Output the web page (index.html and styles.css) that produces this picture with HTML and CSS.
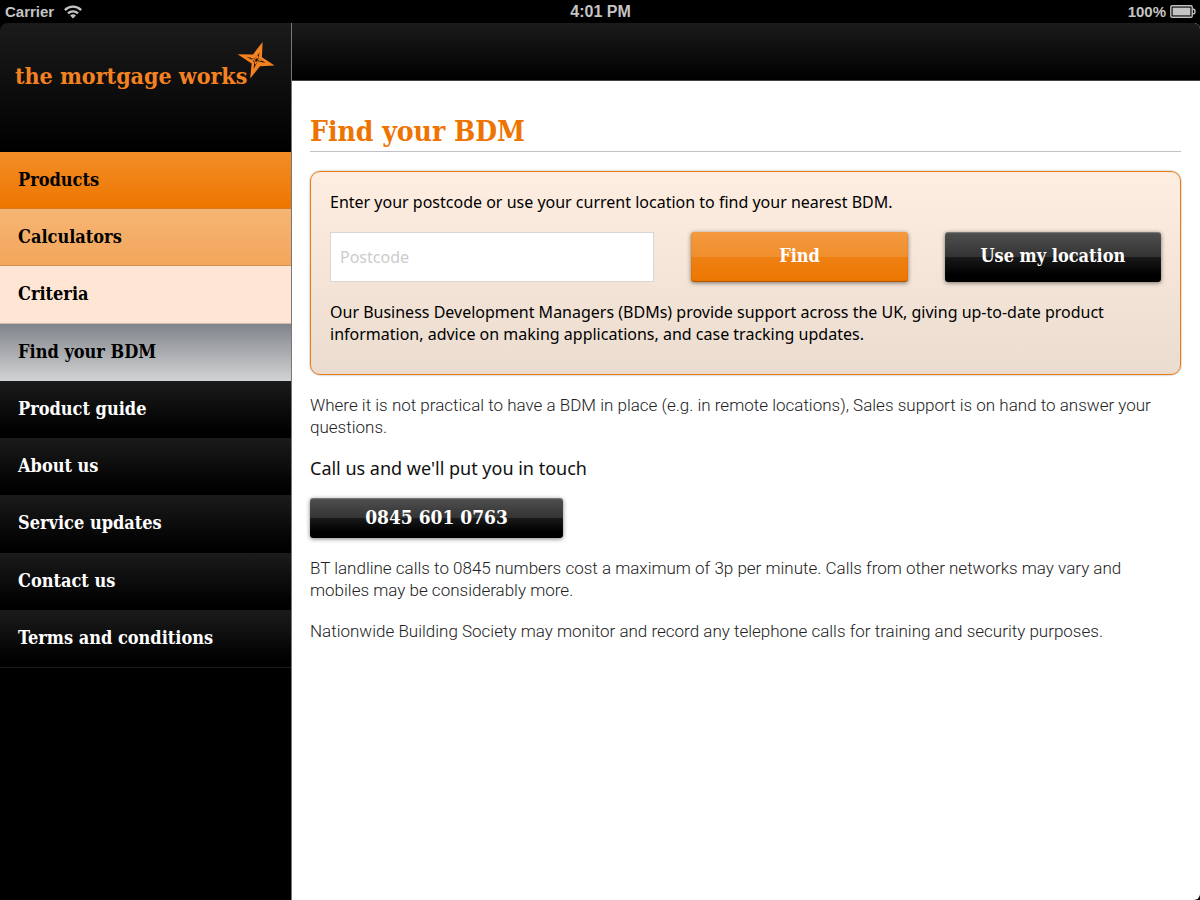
FILE: index.html
```
<!DOCTYPE html>
<html lang="en">
<head>
    <meta charset="UTF-8">
    <meta name="viewport" content="width=device-width, initial-scale=1.0">
    <title>Find your BDM - the mortgage works</title>
    <link rel="stylesheet" href="styles.css">
</head>
<body>
<header class="status-bar">
    <div class="status-left">
        <span>Carrier</span>
        <svg width="18" height="14" viewBox="0 0 18 14" fill="none" stroke="#c4c4c4" stroke-width="2.3">
            <path d="M0.9 5.1 A11.4 11.4 0 0 1 17.1 5.1"/>
            <path d="M4 8.4 A7 7 0 0 1 14 8.4"/>
            <path d="M9 13.6 L6.1 10.6 A4.1 4.1 0 0 1 11.9 10.6 Z" fill="#c4c4c4" stroke="none"/>
        </svg>
    </div>
    <div class="status-time">4:01 PM</div>
    <div class="status-right">
        <span>100%</span>
        <svg width="26" height="13" viewBox="0 0 26 13">
            <rect x="0.8" y="0.8" width="21.4" height="11.4" rx="1.2" fill="none" stroke="#c4c4c4" stroke-width="1.4"/>
            <rect x="2.6" y="2.6" width="17.8" height="7.8" fill="#c4c4c4"/>
            <path d="M22.6 4.2 H23.4 A1.6 2.3 0 0 1 23.4 8.8 H22.6" fill="none" stroke="#c4c4c4" stroke-width="1.4"/>
        </svg>
    </div>
</header>

<div class="app">
    <aside class="sidebar">
        <div class="logo">
            <span class="logo-text">the mortgage works</span>
            <svg class="logo-star" width="38" height="37" viewBox="0 0 38 37">
                <path fill="#f58220" d="M25.6 0 L24.9 15.2 L37.6 23.4 L23 24.2 L13.2 36.4 L14.6 21.4 L0.6 12.2 L16 12.4 Z"/>
                <path fill="#131313" d="M22.6 10.5 L21.4 15.8 L23.4 17.8 L28.8 20.9 L22.2 19.6 L20 20.4 L16.6 27 L17.4 20.8 L15.8 18.2 L9.6 14.8 L16.4 16.4 L19.2 15.4 Z"/>
                <path fill="none" stroke="#f58220" stroke-width="1.1" d="M20.6 14.4 L21 16.8 L23.6 18.4 L20.7 19 L18.5 21.6 L18 19 L15.4 17.2 L18.4 16.9 Z"/>
            </svg>
        </div>
        <nav class="menu">
            <a href="#" class="menu-item products">Products</a>
            <a href="#" class="menu-item calculators">Calculators</a>
            <a href="#" class="menu-item criteria">Criteria</a>
            <a href="#" class="menu-item active">Find your BDM</a>
            <a href="#" class="menu-item">Product guide</a>
            <a href="#" class="menu-item">About us</a>
            <a href="#" class="menu-item">Service updates</a>
            <a href="#" class="menu-item">Contact us</a>
            <a href="#" class="menu-item">Terms and conditions</a>
        </nav>
    </aside>

    <main class="main">
        <div class="top-bar"></div>
        <div class="content">
            <h1>Find your BDM</h1>

            <form class="finder">
                <label for="postcode">Enter your postcode or use your current location to find your nearest BDM.</label>
                <div class="finder-row">
                    <input type="text" id="postcode" class="postcode" placeholder="Postcode">
                    <button type="button" class="btn btn-orange">Find</button>
                    <button type="button" class="btn">Use my location</button>
                </div>
                <p>Our Business Development Managers (BDMs) provide support across the UK, giving up-to-date product information, advice on making applications, and case tracking updates.</p>
            </form>

            <p>Where it is not practical to have a BDM in place (e.g. in remote locations), Sales support is on hand to answer your questions.</p>
            <h2>Call us and we'll put you in touch</h2>
            <a href="tel:08456010763" class="btn btn-phone">0845 601 0763</a>
            <p>BT landline calls to 0845 numbers cost a maximum of 3p per minute. Calls from other networks may vary and mobiles may be considerably more.</p>
            <p>Nationwide Building Society may monitor and record any telephone calls for training and security purposes.</p>
        </div>
    </main>
</div>
</body>
</html>
```

FILE: styles.css
```
* {
    box-sizing: border-box;
}

body {
    margin: 0;
    min-height: 100vh;
    display: flex;
    flex-direction: column;
    background: #000;
    font-family: Roboto, "Liberation Sans", sans-serif;
    font-weight: 300;
    font-size: 17px;
    line-height: 22px;
    color: #222;
}

/* status bar */
.status-bar {
    display: grid;
    grid-template-columns: 1fr auto 1fr;
    align-items: center;
    height: 23px;
    padding: 0 4px 0 5px;
    color: #c4c4c4;
    font-family: "Liberation Sans", Arial, sans-serif;
    font-weight: bold;
    font-size: 15px;
}

.status-left, .status-right {
    display: flex;
    align-items: center;
}

.status-left {
    gap: 10px;
}

.status-right {
    justify-content: flex-end;
    gap: 4px;
}

.status-time {
    font-size: 16px;
}

.app {
    flex: 1;
    display: flex;
}

/* sidebar */
.sidebar {
    flex: 0 0 292px;
    border-right: 1px solid #777;
    background: #000;
}

.logo {
    display: flex;
    align-items: flex-start;
    height: 129px;
    padding: 19px 0 0 15px;
    border-top-left-radius: 8px;
    background: linear-gradient(#1b1b1b, #000);
}

.logo-text {
    padding-top: 20px;
    color: #f58220;
    font-family: "DejaVu Serif Condensed", "DejaVu Serif", serif;
    font-weight: bold;
    font-size: 23px;
    line-height: 28px;
    white-space: nowrap;
}

.logo-star {
    flex: none;
    margin-left: -10px;
}

.menu {
    display: grid;
    grid-auto-rows: 1fr;
    min-height: 516px;
    border-bottom: 1px solid #1b1b1b;
}

.menu-item {
    padding: 16px 18px;
    background: linear-gradient(#1b1b1b, #000 90%);
    color: #fff;
    font-family: "DejaVu Serif Condensed", "DejaVu Serif", serif;
    font-weight: bold;
    font-size: 18px;
    line-height: 24px;
    text-decoration: none;
}

.menu-item.products {
    background: linear-gradient(#f38d28, #ed7600);
    border-bottom: 1px solid #d9781a;
    color: #000;
}

.menu-item.calculators {
    background: linear-gradient(#f6b574, #f3a65b);
    border-bottom: 1px solid #cf9050;
    color: #000;
}

.menu-item.criteria {
    background: #ffe5d3;
    border-bottom: 1px solid #cdbbaf;
    color: #000;
}

.menu-item.active {
    background: linear-gradient(#80848a, #d2d3d4);
    color: #000;
}

/* content */
.main {
    flex: 1;
    overflow: hidden;
    border-radius: 0 6px 6px 0;
    background: #fff;
}

.top-bar {
    height: 58px;
    border-bottom: 1px solid #444;
    background: linear-gradient(#1b1b1b, #000);
}

.content {
    padding: 31px 19px 30px 18px;
}

h1 {
    margin: 0 0 19px;
    border-bottom: 1px solid #bfc1c6;
    color: #ed7400;
    font-family: "DejaVu Serif Condensed", "DejaVu Serif", serif;
    font-size: 28px;
    line-height: 39px;
}

h2 {
    margin: 0 0 19px;
    color: #111;
    font-family: "Noto Sans", sans-serif;
    font-weight: 400;
    font-size: 18px;
    line-height: 22px;
}

p {
    margin: 0 0 19px;
}

.finder {
    margin-bottom: 19px;
    padding: 19px 19px 29px;
    border: 1px solid #ee7a12;
    border-radius: 10px;
    background: linear-gradient(#feeee1, #eadccf);
    box-shadow: 0 0 2px #8a9aa8;
    color: #000;
    font-family: "Noto Sans", sans-serif;
    font-weight: 400;
    font-size: 16px;
}

.finder label {
    display: block;
}

.finder p {
    margin: 0;
}

.finder-row {
    display: grid;
    grid-template-columns: 3fr 2fr 2fr;
    gap: 37px;
    margin: 19px 0;
}

.postcode {
    min-width: 0;
    height: 50px;
    padding: 0 9px;
    border: 1px solid #dcd6d2;
    background: #fff;
    font-family: inherit;
    font-size: 16px;
}

.postcode::placeholder {
    color: #ccc;
}

.btn {
    height: 50px;
    padding: 0 0 3px;
    border: none;
    border-radius: 3px;
    background: linear-gradient(#505050, #333 50%, #1a1a1a 50%, #000 85%);
    box-shadow: 0 1px 4px rgba(0, 0, 0, 0.5), inset 0 1px 1px rgba(255, 255, 255, 0.25);
    color: #fff;
    font-family: "DejaVu Serif Condensed", "DejaVu Serif", serif;
    font-weight: bold;
    font-size: 18px;
    text-align: center;
    cursor: pointer;
}

.btn-orange {
    background: linear-gradient(#f49a3f, #f08e2c 50%, #ee8013 50%, #ec7700);
    box-shadow: 0 1px 4px rgba(0, 0, 0, 0.5), inset 0 -1px 1px rgba(120, 50, 0, 0.5);
}

.btn-phone {
    display: block;
    width: 253px;
    height: 40px;
    margin-bottom: 19px;
    font-size: 19px;
    line-height: 38px;
    text-decoration: none;
}
```
